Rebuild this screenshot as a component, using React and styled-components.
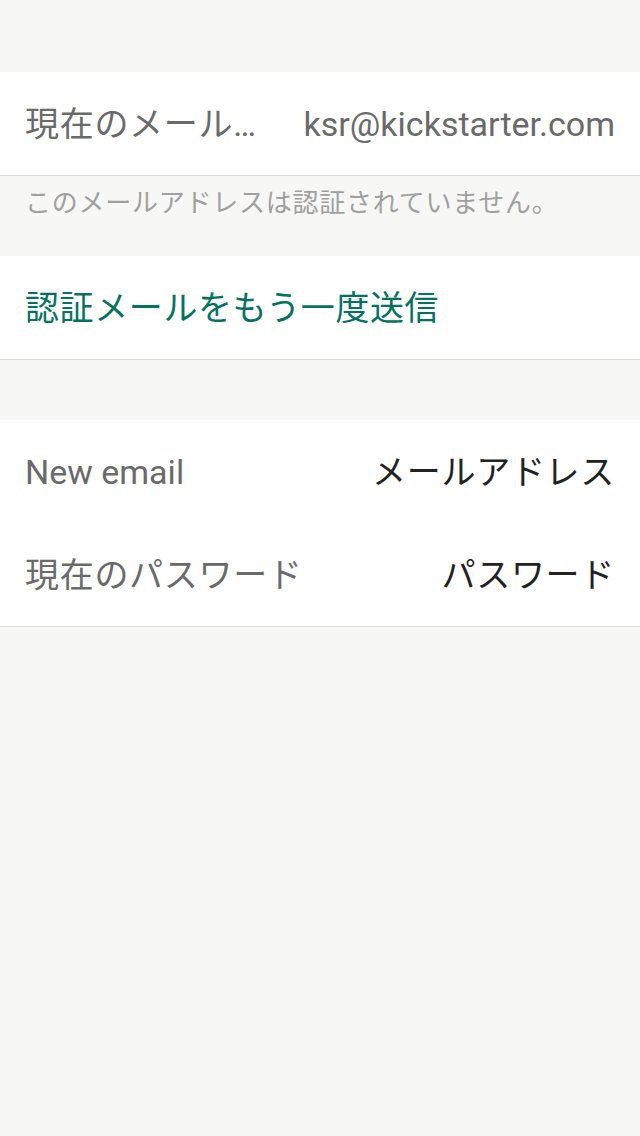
import React from "react";
import styled, { createGlobalStyle, css } from "styled-components";

const Global = createGlobalStyle`
  html, body { margin: 0; padding: 0; background: #f7f7f6; }
  body { font-family: Roboto, "Noto Sans CJK JP", sans-serif; -webkit-font-smoothing: antialiased; }
`;

const cjk = css`
  letter-spacing: ${(p) => (p.$cjk ? "0.7px" : "0")};
`;

const Page = styled.div`
  min-height: 1136px;
  box-sizing: border-box;
  background: #f7f7f6;
  padding-top: 72px;
  display: flex;
  flex-direction: column;
`;

const Section = styled.div`
  background: #ffffff;
  border-bottom: 1px solid #dcdcdc;
  display: flex;
  flex-direction: column;
`;

const Row = styled.div`
  height: ${(p) => p.$h || 103}px;
  display: flex;
  align-items: center;
  justify-content: space-between;
  padding: 0 25px;
  font-size: 34px;
  line-height: 40px;
  gap: 40px;
`;

const Label = styled.span`
  color: #6a6a6a;
  white-space: nowrap;
  overflow: hidden;
  text-overflow: ellipsis;
  flex: ${(p) => (p.$shrink ? "1 1 auto" : "0 0 auto")};
  min-width: 0;
  ${cjk}
`;

const Value = styled.span`
  color: ${(p) => (p.$dark ? "#222222" : "#6a6a6a")};
  white-space: nowrap;
  flex: 0 0 auto;
  text-align: right;
  ${cjk}
`;

const Action = styled.span`
  color: #05725f;
  letter-spacing: 0.6px;
`;

const Footer = styled.div`
  height: 80px;
  padding: 10px 25px 0;
  box-sizing: border-box;
  font-size: 26px;
  line-height: 34px;
  color: #a0a0a0;
  letter-spacing: 0.75px;
`;

const Spacer = styled.div`
  height: ${(p) => p.$h}px;
`;

export default function App() {
  return (
    <>
      <Global />
      <Page>
        <Section>
          <Row>
            <Label $shrink $cjk>現在のメールアドレス</Label>
            <Value>ksr@kickstarter.com</Value>
          </Row>
        </Section>
        <Footer>このメールアドレスは認証されていません。</Footer>
        <Section>
          <Row>
            <Action>認証メールをもう一度送信</Action>
          </Row>
        </Section>
        <Spacer $h={60} />
        <Section>
          <Row $h={104}>
            <Label>New email</Label>
            <Value $dark $cjk>メールアドレス</Value>
          </Row>
          <Row $h={102}>
            <Label $cjk>現在のパスワード</Label>
            <Value $dark $cjk>パスワード</Value>
          </Row>
        </Section>
      </Page>
    </>
  );
}
